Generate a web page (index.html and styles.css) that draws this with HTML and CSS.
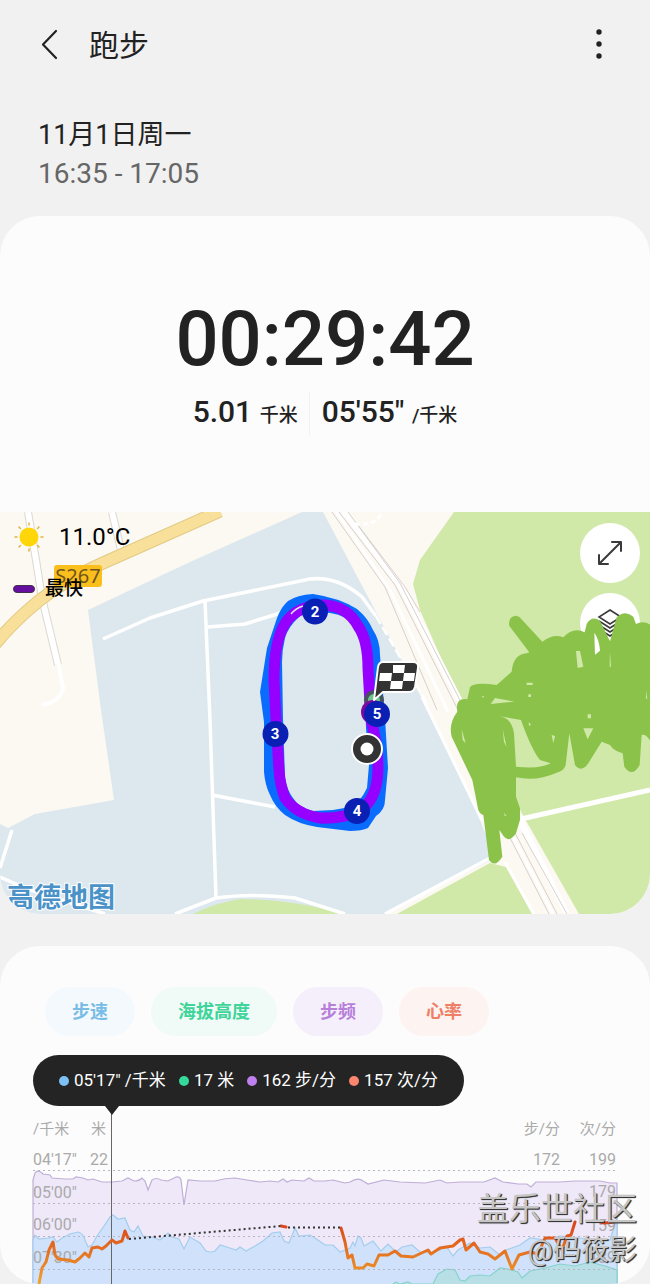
FILE: index.html
```html
<!DOCTYPE html>
<html lang="zh-CN">

<head>
	<meta charset="UTF-8">
	<meta name="viewport" content="width=device-width, initial-scale=1.0">
	<title>跑步</title>
	<link rel="stylesheet" href="styles.css">
</head>

<body>
	<header class="topbar">
		<button class="icon-btn" type="button" aria-label="返回">
			<svg width="20" height="40" viewBox="0 0 20 40"><path d="M18 7 5 20.500 18 34" fill="none" stroke="#222" stroke-width="2.200" stroke-linecap="round" stroke-linejoin="round"/></svg>
		</button>
		<h1>跑步</h1>
		<button class="icon-btn more" type="button" aria-label="更多">
			<svg width="20" height="40" viewBox="0 0 20 40" fill="#222"><circle cx="10" cy="8" r="2.700"/><circle cx="10" cy="20" r="2.700"/><circle cx="10" cy="32" r="2.700"/></svg>
		</button>
	</header>

	<section class="date">
		<h2>11月1日周一</h2>
		<p>16:35 - 17:05</p>
	</section>

	<main>
		<section class="card">
			<div class="summary">
				<time class="timer">00:29:42</time>
				<div class="stats">
					<span class="stat">5.01 <small>千米</small></span>
					<span class="stat">05'55" <small>/千米</small></span>
				</div>
			</div>

			<div class="map">
				<svg class="map-base" viewBox="0 512 650 402">
					<rect y="512" width="650" height="402" fill="#fcf8f2"/>
					<!-- 区域 -->
					<path fill="#dce8ee" d="M302 512H323L428 710 480 820 495 858 385 914H0V824L8 828 35 814 114 800 101 710 88 610 190 562Z"/>
					<path fill="#d0e8a8" d="M454 512 420 560 413 584 420 610 457 695 520 810 579 914H650V512Z"/>
					<path fill="#d0e8a8" d="M397 914 490 863 506 867 532 914ZM193 914Q215 903 240 899 290 899 345 914Z"/>
					<!-- 道路 -->
					<g fill="none" stroke-linejoin="round">
						<path stroke="#ddd8d2" stroke-width="8" d="M28 512 36 560 42 598 58 665M112 512 121 550"/>
						<path stroke="#fff" stroke-width="6" d="M28 512 36 560 42 598 58 665M112 512 121 550"/>
						<path stroke="#fff" stroke-width="4" d="M58 662 63 688Q60 702 42 705"/>
						<path stroke="#e2ca83" stroke-width="13" d="M-5 644Q15 620 40 600 65 580 103 563L220 511"/>
						<path stroke="#f8e09b" stroke-width="11" d="M-5 644Q15 620 40 600 65 580 103 563L220 511"/>
						<path stroke="#fff" stroke-width="3.500" d="M103 639 150 618 203 601 310 579Q338 576 362 597L376 616M205 601 210 720 216 898M208 627 245 624 290 610M212 795 275 807M175 914 216 898Q250 893 295 898L345 914M12 830 0 868M0 877 25 888 105 914M385 914 492 857"/>
						<path stroke="#fff" stroke-width="2.500" stroke-dasharray="9 4" d="M376 616 428 705"/>
						<path stroke="#fff" stroke-width="3" d="M422 697 482 820"/>
						<path stroke="#fff" stroke-width="5" d="M521 819 650 790"/>
						<path stroke="#fff" stroke-width="3" d="M505 862 534 914"/>
						<path stroke="#fff" stroke-width="6" d="M343 510 402 588 462 705 520 820 567 914"/>
						<path stroke="#fff" stroke-width="3" d="M335 510 390 590 448 712M553 914 508 827"/>
						<path stroke="#d8d0cc" stroke-width="1" d="M332 512 385 587 437 710M339 512 395 585 458 710M348 512 400 583 466 712M358 525 405 587 420 612M506 830 549 914M512 827 557 914M522 833 567 914"/>
						<path stroke="#fff" stroke-width="3" stroke-dasharray="5 3" d="M355 524Q375 526 381 514"/>
					</g>
					<g>
						<rect x="54" y="565" width="48" height="22" rx="3" fill="#fbbf1d"/>
						<text class="road-no" x="78" y="583">S267</text>
					</g>
					<text class="map-logo" x="7" y="907">高德地图</text>
					<!-- 轨迹 -->
					<path fill="#0a6cff" fill-rule="evenodd" d="M313 594Q297 595 288 601 281 607 277 618L267 648 260 692 264 722V772Q265 785 270 795 275 807 285 815 298 824 317 827L350 831Q362 831 368 828L376 816Q385 810 385 800L388 768 385 718 380 655Q380 640 373 630 368 618 357 609 340 598 313 594ZM330 613Q310 611 300 616 288 627 285 638 282 650 282 662L283 718 285 778Q287 790 293 798 299 808 313 811L333 810 350 807Q360 803 367 788L369 765 366 728 364 658Q362 638 357 628 347 615 330 613Z"/>
					<path fill="none" stroke="#9500ff" stroke-width="11" d="M325 605Q348 607 358 626 368 640 368 668L371 720Q378 745 378 768 378 800 358 812 340 819 320 818 296 814 285 798 280 785 279 770L276 720 274 680Q274 640 286 622 298 605 325 605Z"/>
					<path fill="none" stroke="#dce8ee" stroke-width="1.500" d="M291 614Q296 608 303 606"/>
					<g>
						<circle cx="374" cy="700" r="8" fill="#6fc48f" stroke="#46525e" stroke-width="4"/>
						<circle cx="373" cy="712" r="12" fill="#7c0aa0"/>
						<g fill="#0a1fb4">
							<circle cx="315" cy="611.500" r="13"/>
							<circle cx="275.500" cy="734" r="13"/>
							<circle cx="357" cy="811" r="13"/>
							<circle cx="377" cy="714" r="13"/>
						</g>
						<g class="lap">
							<text x="315" y="617">2</text>
							<text x="275" y="739">3</text>
							<text x="357" y="816">4</text>
							<text x="377" y="719">5</text>
						</g>
						<circle cx="367" cy="749" r="15" fill="#333" stroke="#fff" stroke-width="2"/>
						<circle cx="367" cy="749" r="6.500" fill="#fff"/>
						<path fill="#333" stroke="#fff" stroke-width="2" stroke-linejoin="round" d="M383 662H413Q419 662 418 668L415 687Q414 692 409 692H383L374 700 378 667Q379 662 383 662Z"/>
						<path fill="#fff" d="M393 665H405L404 673H393ZM380 673H392L391 681H379ZM404 673H415L414 681H403ZM391 681H403L402 689H390Z"/>
					</g>
				</svg>

				<div class="map-info">
					<div class="weather">
						<svg width="32" height="32" viewBox="0 0 32 32">
							<circle cx="16" cy="16" r="9.500" fill="#ffd60a"/>
							<path stroke="#e0b544" stroke-width="1.500" stroke-linecap="round" d="M16 2V4M16 28V30M2 16H4M28 16H30M6 6 7.500 7.500M24.500 24.500 26 26M6 26 7.500 24.500M24.500 7.500 26 6"/>
						</svg>
						<span>11.0°C</span>
					</div>
					<div class="legend"><i></i><span>最快</span></div>
				</div>

				<div class="map-tools">
					<button type="button" aria-label="全屏">
						<svg width="28" height="28" viewBox="0 0 28 28" fill="none" stroke="#3a3a3a" stroke-width="2" stroke-linecap="round" stroke-linejoin="round"><path d="M4 24 24 4M16 3H25V12M3 16V25H12"/></svg>
					</button>
					<button type="button" aria-label="图层">
						<svg width="28" height="28" viewBox="0 0 28 28" fill="none" stroke="#3a3a3a" stroke-width="1.600"><path d="M14 1 25 8 14 15 3 8ZM3 12 14 19 25 12M3 16 14 23 25 16M3 20 14 27 25 20"/></svg>
					</button>
				</div>

				<!-- 涂抹 -->
				<svg class="map-scribble" viewBox="0 512 650 402">
					<g transform="translate(440 600) scale(.3333)">
						<path fill="#8bc34a" d="M208 78Q203 50 228 47 240 49 246 59L307 125Q340 100 370 112 400 80 434 97L440 72Q455 45 480 62L510 124 530 52Q555 28 580 50L588 72Q610 60 632 75V425Q618 400 605 405L599 495Q577 535 553 500L548 460Q520 452 510 435L485 425 445 490Q425 520 405 495L388 400 377 495Q372 513 350 518 290 545 228 532V590L240 625V660L228 700Q205 735 185 700L178 690 187 770Q165 805 147 780L130 645Q115 640 113 620L97 540 35 410Q25 370 52 335 45 292 82 298L90 262Q100 245 170 255L215 215Q220 162 260 160L268 157Z"/>
						<path fill="#d0e8a8" d="M175 348 243 360Q275 450 300 480L332 490Q300 508 228 500L222 400Q215 352 175 348ZM165 294 223 305 152 312ZM408 153H420L430 200 413 204ZM430 385H460L443 418ZM335 405 345 408 340 430ZM65 388 77 430 68 420ZM188 388 200 442 192 425ZM260 248H278V255H260ZM265 283H273V291H265ZM443 343H453V355H443ZM510 155 513 200 509 200ZM618 270 622 298 618 295ZM266 366 273 374 267 378ZM126 288 132 288 129 294ZM193 638 199 648 194 648Z"/>
						<path fill="#fff" d="M463 98Q478 120 480 152L465 164Z"/>
					</g>
				</svg>
			</div>
		</section>

		<section class="card chart-card">
			<div class="chips">
				<button class="chip chip-pace" type="button">步速</button>
				<button class="chip chip-alt" type="button">海拔高度</button>
				<button class="chip chip-cadence" type="button">步频</button>
				<button class="chip chip-heart" type="button">心率</button>
			</div>

			<div class="tip">
				<span class="pace">05'17" /千米</span>
				<span class="alt">17 米</span>
				<span class="cadence">162 步/分</span>
				<span class="heart">157 次/分</span>
			</div>

			<svg class="chart" viewBox="0 1106 650 178">
				<path class="line" fill="#efe8f9" stroke="#bfaed6" d="M33 1284V1180L35 1173Q38 1169 43 1174L50 1175 52 1178 65 1179H73L76 1177 83 1178 88 1180 93 1179 102 1182H112L122 1181 128 1178 134 1181Q139 1181 142 1178L145 1181 148 1190 152 1180Q156 1177 161 1180L168 1181 176 1177Q180 1176 181 1180L184 1205 188 1180 200 1181H215Q225 1178 235 1178L247 1180 260 1182 270 1181 278 1182 283 1179 287 1182 292 1180 304 1181 309 1178 314 1181 325 1181 333 1180 345 1183 350 1182Q358 1177 363 1181L368 1184 384 1180 400 1182 425 1183 440 1180 447 1183 460 1182 484 1182 495 1178 503 1182 518 1184H527L531 1187 536 1182 560 1182 575 1181H600L610 1183H617V1284"/>
				<path class="line" fill="#cfe1fb" stroke="#a3cdec" d="M33 1284V1240L35 1235 39 1239 48 1238 53 1237 57 1242 62 1238 70 1234 78 1232Q83 1233 85 1240L88 1247 92 1245 97 1236 104 1226 110 1217 113 1215 118 1219 125 1218 130 1230 134 1232 138 1226 143 1236 152 1237 160 1240 168 1233 172 1237 179 1239 184 1249 190 1237 200 1243 206 1251Q211 1253 215 1251L220 1245 230 1248 236 1250 240 1247 246 1251 255 1246 263 1241 272 1233 280 1232 284 1241 289 1243 295 1228 299 1236 310 1235 318 1240 325 1245 333 1245 340 1252 350 1248 353 1242 355 1246 358 1236 361 1238 364 1246 373 1241 381 1251 388 1244 396 1252 402 1247 412 1245 420 1252 430 1253 440 1250 446 1246 453 1256 458 1250 470 1243 480 1248 490 1247 500 1255 506 1250 520 1245 530 1238 545 1240 560 1236 580 1238 600 1242 610 1240 617 1218V1284"/>
				<path class="line" fill="#b9dfe6" stroke="#86d3cc" d="M393 1284 396 1282 400 1284 408 1282 412 1284H433L438 1274 447 1269 455 1270 460 1280 465 1281 470 1276 480 1275 490 1276 500 1268 508 1269 518 1272 522 1278 530 1271 545 1268 560 1264 575 1266 590 1262 605 1266 617 1270V1284"/>
				<g class="grid">
					<path d="M33 1170.500H617M33 1203.500H617M33 1236.500H617M33 1269.500H617"/>
				</g>
				<g class="axis">
					<g class="units">
						<text x="33" y="1134">/千米</text>
						<text x="91" y="1134">米</text>
						<text class="end" x="560" y="1134">步/分</text>
						<text class="end" x="616" y="1134">次/分</text>
					</g>
					<text x="33" y="1165">04'17"</text>
					<text class="end" x="108" y="1165">22</text>
					<text class="end" x="560" y="1165">172</text>
					<text class="end" x="616" y="1165">199</text>
					<text x="33" y="1198">05'00"</text>
					<text class="end" x="616" y="1197">179</text>
					<text x="33" y="1230">06'00"</text>
					<text class="end" x="616" y="1231">159</text>
					<text x="33" y="1263">07'30"</text>
					<text class="end" x="616" y="1263">139</text>
				</g>
				<path stroke="#666" d="M111.500 1106V1284"/>
				<linearGradient id="hr" gradientUnits="userSpaceOnUse" x1="0" y1="1222" x2="0" y2="1284">
					<stop offset="0" stop-color="#d9431c"/>
					<stop offset=".35" stop-color="#e2661f"/>
					<stop offset="1" stop-color="#f0a32c"/>
				</linearGradient>
				<path class="heart-line" d="M39 1284 42 1268 46 1262 49 1250 53 1242 55 1255 58 1259 68 1260 75 1262 80 1258 85 1253 89 1257 92 1248 98 1247 102 1249 106 1246 112 1240 116 1243 122 1241 125 1231 128 1238M281 1226 286 1227M341 1228 345 1242 348 1258 352 1255 355 1268 363 1268 367 1264 374 1266 379 1255 388 1255 395 1251 401 1256 413 1257 428 1250 431 1254 440 1248 453 1246 460 1240 463 1239 466 1250 474 1243 480 1252 488 1254 495 1259 505 1251 512 1269 519 1255 530 1252 538 1254 545 1238 555 1238 562 1250 567 1236 571 1235 575 1222M600 1222 605 1223 614 1222"/>
				<path fill="none" stroke="#333" stroke-width="2" stroke-dasharray="2 3" d="M129 1239 281 1226M288 1227.500H341"/>
			</svg>
		</section>
	</main>

	<div class="watermark">
		<p>盖乐世社区</p>
		<p class="author">@码筱影</p>
	</div>
</body>

</html>
```
FILE: styles.css
```css
* {
	box-sizing: border-box;
}

body {
	position: relative;
	margin: 0;
	background: #f1f1f1;
	color: #222;
	font-family: Roboto, "Noto Sans CJK SC", sans-serif;
}

h1,
h2,
p {
	margin: 0;
	font-weight: 400;
}

button {
	padding: 0;
	border: 0;
	font-family: inherit;
}

svg {
	display: block;
}

.topbar {
	display: flex;
	align-items: center;
	padding: 24px 41px 0 38px;
}

.topbar h1 {
	margin-left: 31px;
	padding-top: 4px;
	font-size: 30px;
	line-height: 36px;
}

.icon-btn {
	background: none;
}

.more {
	margin-left: auto;
}

.date {
	padding: 51px 38px 23px;
}

.date h2 {
	font-size: 27px;
	line-height: 40px;
}

.date p {
	color: #666;
	font-size: 28px;
	line-height: 38px;
}

.card {
	overflow: hidden;
	border-radius: 40px;
	background: #fcfcfc;
}

.summary {
	display: flex;
	flex-direction: column;
	align-items: center;
	padding: 78px 0 76px;
}

.timer {
	font-size: 76px;
	font-weight: 500;
	line-height: 90px;
}

.stats {
	display: flex;
	margin-top: 8px;
}

.stat {
	font-size: 30px;
	font-weight: 500;
	line-height: 40px;
}

.stat+.stat {
	margin-left: 11px;
	padding-left: 12px;
	border-left: 1px solid #f2f2f2;
}

.stat small {
	font-size: 19px;
}

/* 地图 */
.map {
	position: relative;
}

.map-base,
.map-scribble,
.chart {
	width: 100%;
}

.map-scribble {
	position: absolute;
	inset: 0;
	pointer-events: none;
}

.road-no {
	fill: #70561a;
	font-family: "Noto Sans", sans-serif;
	font-size: 20px;
	text-anchor: middle;
}

.map-logo {
	fill: #4a92c8;
	stroke: #fff;
	stroke-width: 2px;
	paint-order: stroke;
	font-size: 27px;
	font-weight: 700;
}

.lap {
	fill: #fff;
	font-size: 15px;
	font-weight: 700;
	text-anchor: middle;
}

.map-info {
	position: absolute;
	top: 9px;
	left: 13px;
	color: #000;
}

.weather {
	display: flex;
	align-items: center;
	gap: 14px;
	font-size: 24px;
	line-height: 32px;
}

.legend {
	display: flex;
	align-items: center;
	gap: 10px;
	margin-top: 22px;
	font-size: 19px;
	font-weight: 500;
	line-height: 28px;
}

.legend i {
	width: 22px;
	height: 8px;
	border: 1px solid #40304e;
	border-radius: 4px;
	background: #650f9f;
}

.map-tools {
	position: absolute;
	top: 11px;
	right: 10px;
	display: flex;
	flex-direction: column;
	gap: 10px;
}

.map-tools button {
	display: flex;
	align-items: center;
	justify-content: center;
	width: 60px;
	height: 60px;
	border-radius: 50%;
	background: #fff;
}

/* 图表 */
.chart-card {
	margin-top: 32px;
	padding-top: 41px;
}

.chips {
	display: flex;
	gap: 16px;
	padding-left: 45px;
}

.chip {
	padding: 0 27px;
	border-radius: 25px;
	font-size: 18px;
	font-weight: 700;
	line-height: 49px;
}

.chip-pace {
	background: #f4f9fe;
	color: #79bde6;
}

.chip-alt {
	background: #f0fbf7;
	color: #3fd49a;
}

.chip-cadence {
	background: #f4effb;
	color: #b77fd9;
}

.chip-heart {
	background: #fdf3f1;
	color: #ee8068;
}

.tip {
	position: relative;
	display: flex;
	gap: 13px;
	width: fit-content;
	margin: 19px 0 0 33px;
	padding: 0 26px;
	border-radius: 26px;
	background: #242424;
	color: #fff;
	font-size: 17px;
	line-height: 51px;
}

.tip::after {
	content: "";
	position: absolute;
	top: 100%;
	left: 72px;
	border: 7px solid transparent;
	border-top: 9px solid #242424;
	border-bottom: 0;
}

.tip span {
	display: flex;
	align-items: center;
	gap: 5px;
	white-space: pre;
}

.tip span::before {
	content: "";
	width: 10px;
	height: 10px;
	border-radius: 50%;
	background: #7cc0f5;
}

.tip .alt::before {
	background: #35d99c;
}

.tip .cadence::before {
	background: #bd80ee;
}

.tip .heart::before {
	background: #fa8670;
}

.line {
	stroke-width: 1.2px;
}

.grid {
	stroke: #b9b4c4;
	stroke-width: 1px;
	stroke-dasharray: 2 3;
}

.axis {
	fill: #aaa;
	font-size: 16px;
}

.units {
	font-size: 15px;
}

.end {
	text-anchor: end;
}

.heart-line {
	fill: none;
	stroke: url(#hr);
	stroke-width: 3px;
	stroke-linejoin: round;
	stroke-linecap: round;
}

.watermark {
	position: absolute;
	right: 13px;
	bottom: 12px;
	color: #c6c6c6;
	font-size: 32px;
	font-weight: 500;
	line-height: 42px;
	text-align: right;
	text-shadow: 1px 1px 1px #333, 1px 1px 0 #555;
}

.author {
	font-size: 28px;
	font-weight: 400;
}
```
